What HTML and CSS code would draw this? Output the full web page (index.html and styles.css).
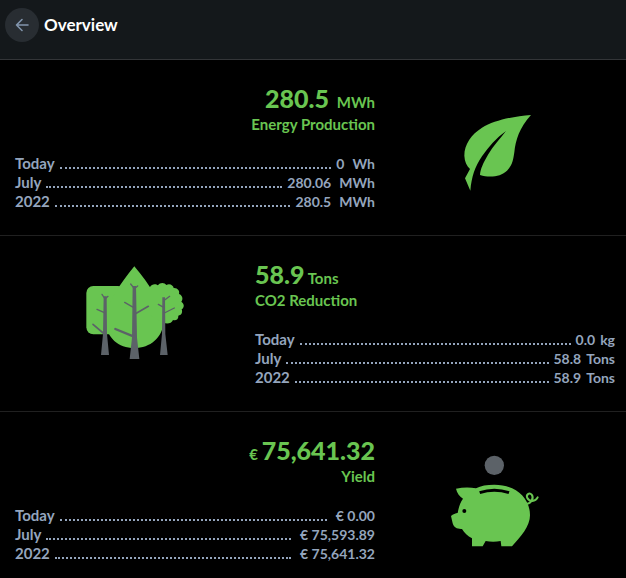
FILE: index.html
```
<!DOCTYPE html>
<html lang="en">

<head>
    <meta charset="UTF-8">
    <meta name="viewport" content="width=device-width, initial-scale=1.0">
    <title>Overview</title>
    <link rel="stylesheet" href="styles.css">
</head>

<body>
    <header class="header">
        <button class="back" type="button" aria-label="Back">
            <svg width="14" height="14" viewBox="0 0 14 14" fill="none" stroke="currentColor" stroke-width="1.6" stroke-linecap="round" stroke-linejoin="round">
                <path d="M13 7H1.5M7 1.5L1.5 7L7 12.5" />
            </svg>
        </button>
        <h1 class="title">Overview</h1>
    </header>

    <main>
        <section class="panel">
            <div class="info">
                <div class="summary right">
                    <p class="total"><strong class="energy">280.5</strong> <span>MWh</span></p>
                    <h2 class="label">Energy Production</h2>
                </div>
                <ul class="rows">
                    <li class="row"><span class="period">Today</span><i class="dots"></i><span>0</span><span class="unit">Wh</span></li>
                    <li class="row"><span class="period">July</span><i class="dots"></i><span>280.06</span><span class="unit">MWh</span></li>
                    <li class="row"><span class="period">2022</span><i class="dots"></i><span>280.5</span><span class="unit">MWh</span></li>
                </ul>
            </div>
            <div class="picture">
                <!-- leaf -->
                <svg class="icon" viewBox="-15 -33 360 381">
                    <path class="green" d="M273 60C220 64 162 76 126 98C94 118 73 148 73 182C74 200 80 213 90 222L75 250L91 287C95 246 104 216 126 184C145 156 169 129 198 108C179 132 159 154 144 179C130 203 121 222 120 240C151 250 183 244 201 227C218 211 220 191 223 172C227 134 238 99 273 60Z" />
                </svg>
            </div>
        </section>

        <section class="panel flip">
            <div class="info">
                <div class="summary">
                    <p class="total"><strong>58.9</strong> <span>Tons</span></p>
                    <h2 class="label">CO2 Reduction</h2>
                </div>
                <ul class="rows">
                    <li class="row"><span class="period">Today</span><i class="dots"></i><span>0.0</span><span class="unit small">kg</span></li>
                    <li class="row"><span class="period">July</span><i class="dots"></i><span>58.8</span><span class="unit small">Tons</span></li>
                    <li class="row"><span class="period">2022</span><i class="dots"></i><span>58.9</span><span class="unit small">Tons</span></li>
                </ul>
            </div>
            <div class="picture">
                <!-- trees -->
                <svg class="icon" viewBox="15 15 360 381">
                    <g class="green">
                        <rect x="49" y="93" width="116" height="145" rx="21" />
                        <path d="M193 34C173 59 149 89 131 122C111 157 107 185 107 200C110 248 145 279 193 279C242 279 277 248 281 201C280 175 272 148 255 121C237 89 215 60 193 34Z" />
                        <path d="M240 96C245 86 258 86 264 91C270 81 284 82 289 90C299 84 310 91 311 99C323 98 330 108 327 117C338 121 340 133 334 140C344 147 343 158 335 163C339 174 333 181 325 182C326 193 317 198 309 195C305 206 292 207 281 204L240 180Z" />
                    </g>
                    <g class="gray">
                        <path d="M101 124H110L111 237L117 300H93L99 237Z" />
                        <path d="M188 93H198L201 248L208 312H179L186 248Z" />
                        <path d="M277 127H285L286 237L293 300H270L276 237Z" />
                    </g>
                    <g class="branches">
                        <path stroke-width="4" d="M105 132L96 118M105 132L114 124M103 173L81 163M281 137L299 124M281 157L265 148M283 174L313 159M193 101L182 87M193 101L203 93M190 157L164 142" />
                        <path stroke-width="5" d="M103 237L69 208M195 177L235 154" />
                        <path stroke-width="7" d="M190 244L136 222" />
                    </g>
                </svg>
            </div>
        </section>

        <section class="panel">
            <div class="info">
                <div class="summary right">
                    <p class="total"><span>€</span> <strong>75,641.32</strong></p>
                    <h2 class="label">Yield</h2>
                </div>
                <ul class="rows">
                    <li class="row"><span class="period">Today</span><i class="dots wide"></i><span>€ 0.00</span></li>
                    <li class="row"><span class="period">July</span><i class="dots wide"></i><span>€ 75,593.89</span></li>
                    <li class="row"><span class="period">2022</span><i class="dots wide"></i><span>€ 75,641.32</span></li>
                </ul>
            </div>
            <div class="picture">
                <!-- piggy bank -->
                <svg class="icon" viewBox="-15 -27 360 381">
                    <circle class="gray" cx="163" cy="61" r="29" />
                    <path class="green" d="M48 131C69 127 90 127 108 130C123 122 140 119 163 119C224 119 270 156 270 211C270 244 243 275 216 304H184L182 288C168 291 151 291 137 288L128 304H96V280C83 273 73 264 66 252C52 253 41 247 38 235L33 213C39 208 47 205 53 204C56 188 60 173 69 161C58 154 51 144 48 131Z" />
                    <path d="M119 143C146 134 180 134 207 143" fill="none" stroke="#000" stroke-width="9" />
                    <circle cx="73" cy="198" r="6" />
                    <path class="tail" d="M262 176C273 175 283 159 275 149C268 141 257 149 262 159C268 171 286 171 293 157" />
                </svg>
            </div>
        </section>
    </main>
</body>

</html>
```
FILE: styles.css
```
body {
    font-family: Lato, "Liberation Sans", sans-serif;
    font-size: 14px;
    font-weight: 700;
    background-color: #000;
    color: #94a5bd;
    margin: 0;
}

.header {
    display: flex;
    align-items: center;
    gap: 5px;
    padding: 8px 5px 17px;
    background-color: #14181b;
    border-bottom: 1px solid #333538;
}

.back {
    display: flex;
    align-items: center;
    justify-content: center;
    width: 34px;
    height: 34px;
    padding: 0;
    border: none;
    border-radius: 50%;
    background-color: #282d32;
    color: #8295ad;
    cursor: pointer;
}

.title {
    margin: 0;
    font-size: 17px;
    line-height: 34px;
    color: #fff;
}

.panel {
    display: grid;
    grid-template-columns: 3fr 2fr;
    padding: 24px 11px 24px 15px;
    border-bottom: 1px solid #202020;
}

.panel:last-child {
    padding-bottom: 15px;
    border-bottom: none;
}

.panel.flip {
    grid-template-columns: 2fr 3fr;
}

.flip .picture {
    order: -1;
}

.picture {
    display: flex;
    align-items: center;
    justify-content: center;
}

.icon {
    width: 120px;
    height: 127px;
}

.green {
    fill: #69c551;
}

.gray {
    fill: #5c6268;
}

.branches {
    stroke: #5c6268;
    stroke-linecap: round;
}

.tail {
    fill: none;
    stroke: #69c551;
    stroke-width: 6;
    stroke-linecap: round;
}

.summary {
    margin-bottom: 18px;
    color: #69c551;
}

.summary.right {
    text-align: right;
}

.total {
    margin: 0;
    font-size: 15px;
    line-height: 20px;
}

.total strong {
    font-size: 25px;
    line-height: 28px;
}

.total .energy {
    margin-right: 4px;
}

.label {
    margin: 0;
    font-size: 15px;
    line-height: 24px;
}

.rows {
    margin: 0;
    padding: 0;
    list-style: none;
}

.row {
    display: flex;
    align-items: baseline;
    height: 19px;
    line-height: 19px;
}

.period {
    font-size: 15px;
}

.dots {
    flex: 1;
    margin: 0 5px;
    border-bottom: 2px dotted #94a5bd;
}

.dots.wide {
    margin-right: 9px;
}

.unit {
    margin-left: 8px;
}

.unit.small {
    margin-left: 5px;
}
```
